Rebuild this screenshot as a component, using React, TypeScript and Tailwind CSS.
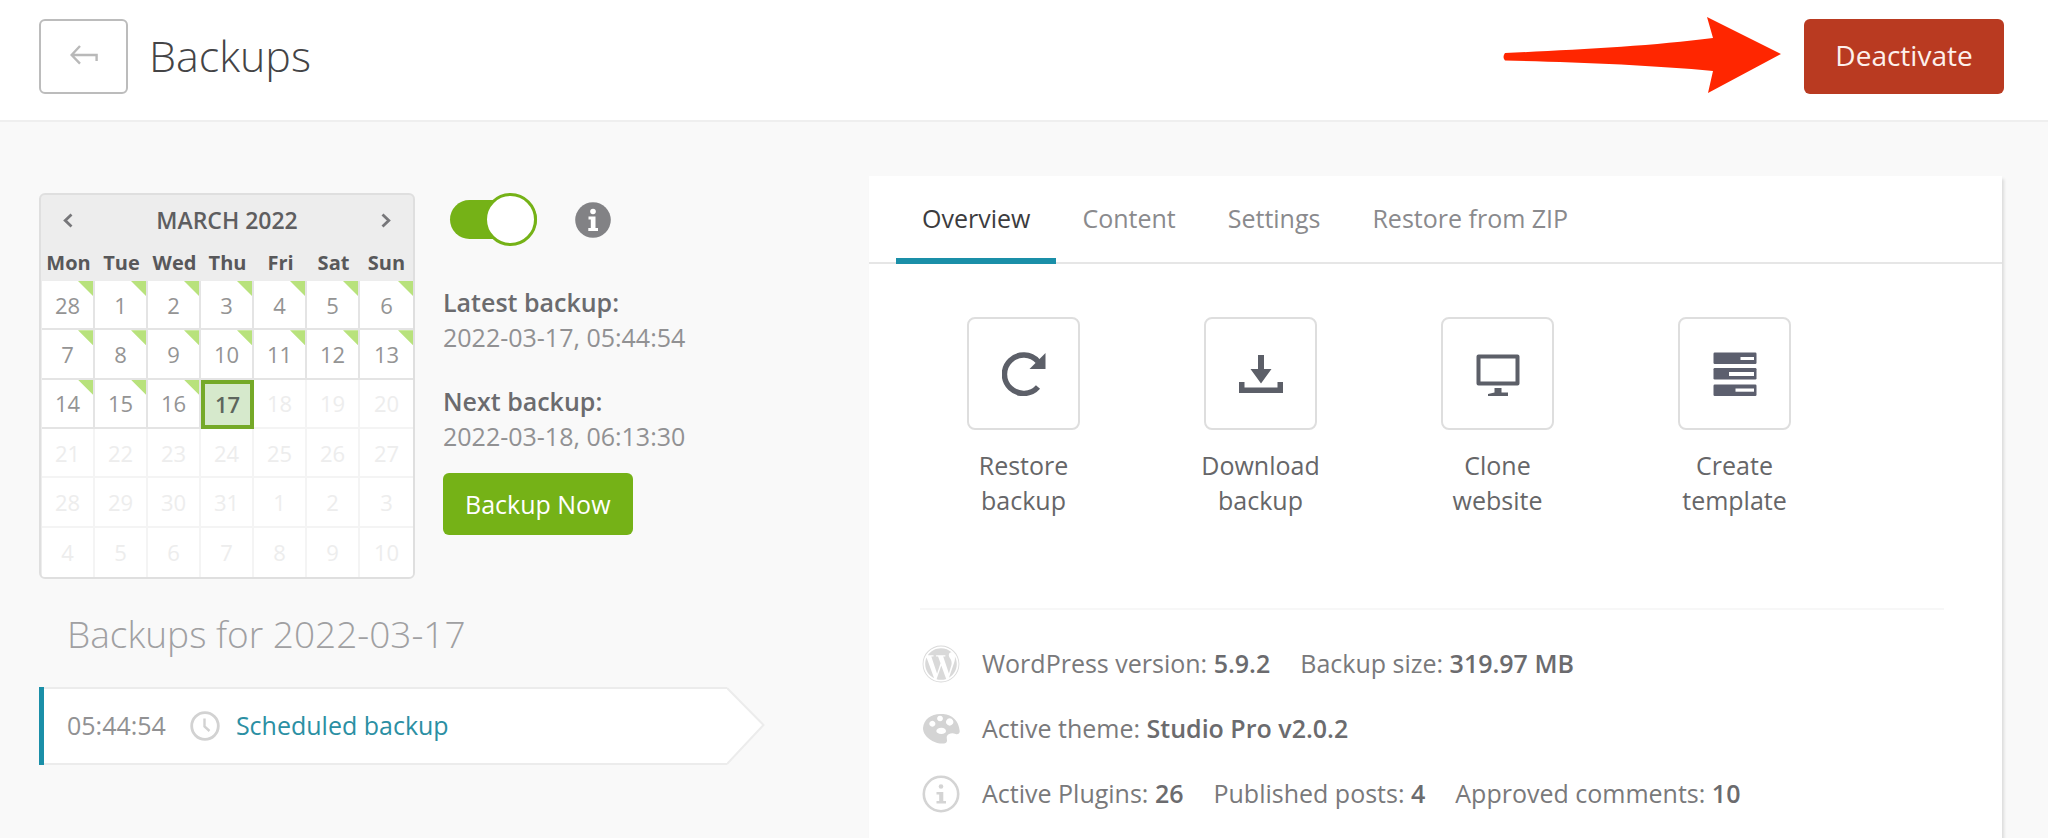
import { useState } from "react";
import { FaWordpress } from "react-icons/fa";

const WEEKDAYS = ["Mon", "Tue", "Wed", "Thu", "Fri", "Sat", "Sun"];

const WEEKS = [
  [28, 1, 2, 3, 4, 5, 6],
  [7, 8, 9, 10, 11, 12, 13],
  [14, 15, 16, 17, 18, 19, 20],
  [21, 22, 23, 24, 25, 26, 27],
  [28, 29, 30, 31, 1, 2, 3],
  [4, 5, 6, 7, 8, 9, 10],
];

const TODAY_INDEX = 17;

function BackIcon() {
  return (
    <svg width="28" height="20" viewBox="0 0 28 20" fill="none" stroke="#b9b9b9" strokeWidth="2.4" aria-hidden="true">
      <path d="M10 1 L1.6 10 L10 18.6 M2 10 H26.6 V16" />
    </svg>
  );
}

function PointerArrow() {
  return (
    <svg width="280" height="78" viewBox="0 0 280 78" fill="#ff2600" aria-hidden="true" className="mb-1 shrink-0">
      <path d="M3 37 C70 34 150 30 211 22 L205 1 L279 38 L206 77 L211 55 C150 49 70 46 3 44.500 Q0 41 3 37 Z" />
    </svg>
  );
}

function Chevron({ flip = false }: { flip?: boolean }) {
  return (
    <svg width="10" height="15" viewBox="0 0 10 15" fill="none" stroke="#77777a" strokeWidth="2.8" aria-hidden="true">
      {flip ? <path d="M1.500 1.500 L7.800 7.500 L1.500 13.500" /> : <path d="M8.500 1.500 L2.200 7.500 L8.500 13.500" />}
    </svg>
  );
}

function InfoSolid() {
  return (
    <svg width="36" height="36" viewBox="0 0 36 36" aria-hidden="true">
      <circle cx="18" cy="18" r="17.800" fill="#828285" />
      <g fill="#fff">
        <circle cx="18" cy="9.500" r="2.800" />
        <path d="M13.500 14.500 H20.500 V26 H23 V29 H13.300 V26 H15.800 V17.500 H13.500 Z" />
      </g>
    </svg>
  );
}

function ClockIcon() {
  return (
    <svg width="30" height="30" viewBox="0 0 30 30" fill="none" stroke="#d2d2d2" aria-hidden="true">
      <circle cx="15" cy="15" r="13.300" strokeWidth="2.800" />
      <path d="M14.500 7.500 V15.500 L19.500 20" strokeWidth="2.400" />
    </svg>
  );
}

function RestoreIcon() {
  return (
    <svg width="44" height="44" viewBox="0 0 44 44" aria-hidden="true">
      <path d="M36 35 A19.200 19.200 0 1 1 36 9.500" fill="none" stroke="#5c5f68" strokeWidth="5.500" strokeLinecap="butt" />
      <path d="M43.500 1 V17 H27.500 Z" fill="#5c5f68" />
    </svg>
  );
}

function DownloadIcon() {
  return (
    <svg width="44" height="44" viewBox="0 0 44 44" fill="#5c5f68" aria-hidden="true">
      <path d="M19 3 H25 V17 H32.500 L22 31.500 L11.500 17 H19 Z" />
      <path d="M0 30 H5.500 V35.500 H38.500 V30 H44 V41 H0 Z" />
    </svg>
  );
}

function MonitorIcon() {
  return (
    <svg width="44" height="44" viewBox="0 0 44 44" fill="#5c5f68" aria-hidden="true">
      <path fillRule="evenodd" d="M2.500 2.500 H41.500 Q43.500 2.500 43.500 4.500 V31.500 Q43.500 33.500 41.500 33.500 H2.500 Q0.500 33.500 0.500 31.500 V4.500 Q0.500 2.500 2.500 2.500 Z M4.500 6.500 V29.500 H39.500 V6.500 Z" />
      <path d="M18.500 36 H25.500 V40.500 H32 V44 H12 V42 L18.500 40.500 Z" />
    </svg>
  );
}

function ServerIcon() {
  return (
    <svg width="44" height="44" viewBox="0 0 44 44" aria-hidden="true">
      <g fill="#5c5f6e">
        <rect x="0.500" y="0.500" width="43" height="11.500" rx="1.200" />
        <rect x="0.500" y="16" width="43" height="11.500" rx="1.200" />
        <rect x="0.500" y="32.500" width="43" height="11.500" rx="1.200" />
      </g>
      <g fill="#fff">
        <rect x="27.500" y="5" width="13.500" height="3" />
        <rect x="16" y="20" width="25" height="4" />
        <rect x="22.500" y="36.500" width="18.500" height="3.200" />
      </g>
    </svg>
  );
}

function PaletteIcon() {
  return (
    <svg width="37" height="30" viewBox="0 0 111 90" fill="#d4d4d4" aria-hidden="true">
      <path
        fillRule="evenodd"
        d="M52 0 C84 -2 107 18 110 50 C111 58 105 62 98 60 C88 56 76 58 72 66 C69 74 76 82 68 87 C60 91 40 88 28 81 C8 70 0 56 0 42 C2 16 24 1 52 0 Z M28 20 a9 9 0 1 0 0.100 0 Z M51 5 a8.500 8.500 0 1 0 0.100 0 Z M80 13 a11 11 0 1 0 0.100 0 Z M55 41 c-9 0 -15 5 -15 10 s6 9 15 9 s14 -4 14 -9 s-5 -10 -14 -10 Z"
      />
    </svg>
  );
}

function InfoOutline() {
  return (
    <svg width="38" height="38" viewBox="0 0 38 38" aria-hidden="true">
      <circle cx="19" cy="19" r="17.200" fill="none" stroke="#d4d4d4" strokeWidth="2.600" />
      <g fill="#d4d4d4">
        <circle cx="19" cy="11.500" r="2.300" />
        <path d="M14.500 17 H21.300 V26 H24 V28.500 H14.500 V26 H17.200 V19.500 H14.500 Z" />
      </g>
    </svg>
  );
}

function Calendar() {
  return (
    <section className="shrink-0 overflow-hidden rounded-md border-2 border-[#dfdfdf] bg-[#ededed]">
      <div className="flex h-[50px] items-center justify-between px-[22px] text-[23px] font-semibold text-[#5e5e60]">
        <button type="button" aria-label="Previous month">
          <Chevron />
        </button>
        <h2>MARCH 2022</h2>
        <button type="button" aria-label="Next month">
          <Chevron flip />
        </button>
      </div>
      <table className="h-[332px] table-fixed border-separate border-spacing-0 pl-px text-center">
        <thead>
          <tr className="h-9 text-[20px] leading-9 text-[#58585a]">
            {WEEKDAYS.map((day) => (
              <th key={day} scope="col" className="w-[53px] p-0 font-bold">
                {day}
              </th>
            ))}
          </tr>
        </thead>
        <tbody className="text-[22px] leading-6">
          {WEEKS.map((week, row) => (
            <tr key={row} className="group h-[49px]">
              {week.map((day, col) => {
                const index = row * 7 + col;
                if (index === TODAY_INDEX) {
                  return (
                    <td key={col} className="border-4 border-[#75a928] bg-[#d6e9cc] p-0 font-semibold text-[#5d665d]">
                      {day}
                    </td>
                  );
                }
                if (index > TODAY_INDEX) {
                  return (
                    <td
                      key={col}
                      className="border-r-2 border-b-2 border-[#f4f4f4] bg-white p-0 text-[#ededed] group-last:border-b-0 last:border-r-0"
                    >
                      {day}
                    </td>
                  );
                }
                return (
                  <td
                    key={col}
                    className="relative border-r-2 border-b-2 border-[#e4e4e4] bg-white p-0 text-[#949494] last:border-r-0"
                  >
                    {day}
                    <span className="absolute top-0 right-0 size-[15px] bg-[#b8e27c] [clip-path:polygon(0_0,100%_0,100%_100%)]" />
                  </td>
                );
              })}
            </tr>
          ))}
        </tbody>
      </table>
    </section>
  );
}

function BackupStatus() {
  const [enabled, setEnabled] = useState(true);
  return (
    <div className="text-[25px] leading-[35px]">
      <div className="flex h-[53px] items-center">
        <label className="relative ml-[7px] flex h-[53px] w-[87px] cursor-pointer items-center">
          <input
            type="checkbox"
            checked={enabled}
            onChange={(event) => setEnabled(event.target.checked)}
            aria-label="Automatic backups"
            className="peer absolute inset-0 size-full opacity-0"
          />
          <span className="h-[39px] w-full rounded-full bg-[#b5b5b5] peer-checked:bg-[#75b217]" />
          <span className="absolute left-0 size-[53px] rounded-full border-[3px] border-[#b5b5b5] bg-white peer-checked:right-0 peer-checked:left-auto peer-checked:border-[#75b217]" />
        </label>
        <button type="button" aria-label="About automatic backups" className="ml-[38px]">
          <InfoSolid />
        </button>
      </div>
      <dl className="mt-[39px] text-[#919193]">
        <dt className="font-semibold text-[#6b6b6e]">Latest backup:</dt>
        <dd>2022-03-17, 05:44:54</dd>
        <dt className="mt-[29px] font-semibold text-[#6b6b6e]">Next backup:</dt>
        <dd>2022-03-18, 06:13:30</dd>
      </dl>
      <button type="button" className="mt-[19px] h-[62px] rounded-md bg-[#75b217] px-[22px] text-white">
        Backup Now
      </button>
    </div>
  );
}

function BackupEntry() {
  return (
    <a href="#backup" className="flex h-[78px] items-stretch text-[25px]">
      <span className="w-[5px] bg-[#1a8fa8]" />
      <span className="flex flex-1 items-center border-y-2 border-[#ececec] bg-white pl-[23px]">
        <span className="text-[#919193]">05:44:54</span>
        <span className="ml-6">
          <ClockIcon />
        </span>
        <span className="ml-4 text-[#2b8fa3]">Scheduled backup</span>
      </span>
      <svg width="38" height="78" viewBox="0 0 38 78" aria-hidden="true">
        <path d="M0 1 L36.500 38 L0 77 Z" fill="#fff" />
        <path d="M0 1 L36.500 38 L0 77" fill="none" stroke="#ececec" strokeWidth="2" />
      </svg>
    </a>
  );
}

const TABS = ["Overview", "Content", "Settings", "Restore from ZIP"];

const ACTIONS = [
  { icon: <RestoreIcon />, verb: "Restore", object: "backup" },
  { icon: <DownloadIcon />, verb: "Download", object: "backup" },
  { icon: <MonitorIcon />, verb: "Clone", object: "website" },
  { icon: <ServerIcon />, verb: "Create", object: "template" },
];

const FACTS = [
  {
    icon: <FaWordpress size={38} color="#d9d9d9" aria-hidden="true" />,
    items: [
      ["WordPress version:", "5.9.2"],
      ["Backup size:", "319.97 MB"],
    ],
  },
  { icon: <PaletteIcon />, items: [["Active theme:", "Studio Pro v2.0.2"]] },
  {
    icon: <InfoOutline />,
    items: [
      ["Active Plugins:", "26"],
      ["Published posts:", "4"],
      ["Approved comments:", "10"],
    ],
  },
];

function DetailsPanel() {
  const [active, setActive] = useState(TABS[0]);
  return (
    <section className="bg-white text-[25px] shadow-[2px_3px_3px_rgba(0,0,0,0.12)]">
      <div role="tablist" className="flex h-[88px] border-b-2 border-[#e6e6e6] pl-[27px]">
        {TABS.map((tab) => (
          <button
            key={tab}
            type="button"
            role="tab"
            aria-selected={tab === active}
            onClick={() => setActive(tab)}
            className="-mb-0.5 border-b-[6px] border-transparent px-[26px] pt-[4px] text-[#8a8a8d] aria-selected:border-[#1a8fa8] aria-selected:text-[#3c3c3e]"
          >
            {tab}
          </button>
        ))}
      </div>
      <div className="flex flex-wrap pt-[53px] pl-9">
        {ACTIONS.map(({ icon, verb, object }) => (
          <button key={verb} type="button" className="flex w-[237px] flex-col items-center leading-[35px] text-[#666668]">
            <span className="mb-[18px] flex size-[113px] items-center justify-center rounded-lg border-2 border-[#dedede]">
              {icon}
            </span>
            <span>{verb}</span>
            <span>{object}</span>
          </button>
        ))}
      </div>
      <ul className="mt-[90px] mr-[58px] ml-[51px] border-t-2 border-[#f7f7f7] pt-[21px] text-[#79797b]">
        {FACTS.map(({ icon, items }) => (
          <li key={items[0][0]} className="flex h-[65px] items-center">
            <span className="mr-5 flex w-[42px] justify-center">{icon}</span>
            <span className="flex gap-[30px]">
              {items.map(([label, value]) => (
                <span key={label}>
                  {label} <strong className="font-semibold text-[#6b6b6e]">{value}</strong>
                </span>
              ))}
            </span>
          </li>
        ))}
      </ul>
    </section>
  );
}

export default function App() {
  return (
    <div className="flex min-h-screen flex-col bg-[#f9f9f9] font-['Open_Sans',sans-serif]">
      <header className="flex h-[122px] items-center border-b-2 border-[#efefef] bg-white pr-11 pb-[7px] pl-[39px]">
        <button
          type="button"
          aria-label="Back"
          className="flex h-[75px] w-[89px] items-center justify-center rounded-md border-2 border-[#bcbcbc] pb-1"
        >
          <BackIcon />
        </button>
        <h1 className="ml-[21px] text-[43px] font-light text-[#444446]">Backups</h1>
        <div className="ml-auto flex items-center gap-[22px]">
          <PointerArrow />
          <button type="button" className="h-[75px] w-[200px] rounded-md bg-[#b93a21] pb-1 text-[28px] text-[#fdf0ec]">
            Deactivate
          </button>
        </div>
      </header>
      <main className="grid flex-1 grid-cols-[726fr_1133fr] gap-[104px] pt-[54px] pr-[46px] pl-[39px]">
        <div className="pt-[17px]">
          <div className="flex gap-7">
            <Calendar />
            <BackupStatus />
          </div>
          <h2 className="mt-[30px] mb-7 ml-7 text-[37px] leading-[50px] font-light text-[#a0a0a2]">Backups for 2022-03-17</h2>
          <BackupEntry />
        </div>
        <DetailsPanel />
      </main>
    </div>
  );
}
